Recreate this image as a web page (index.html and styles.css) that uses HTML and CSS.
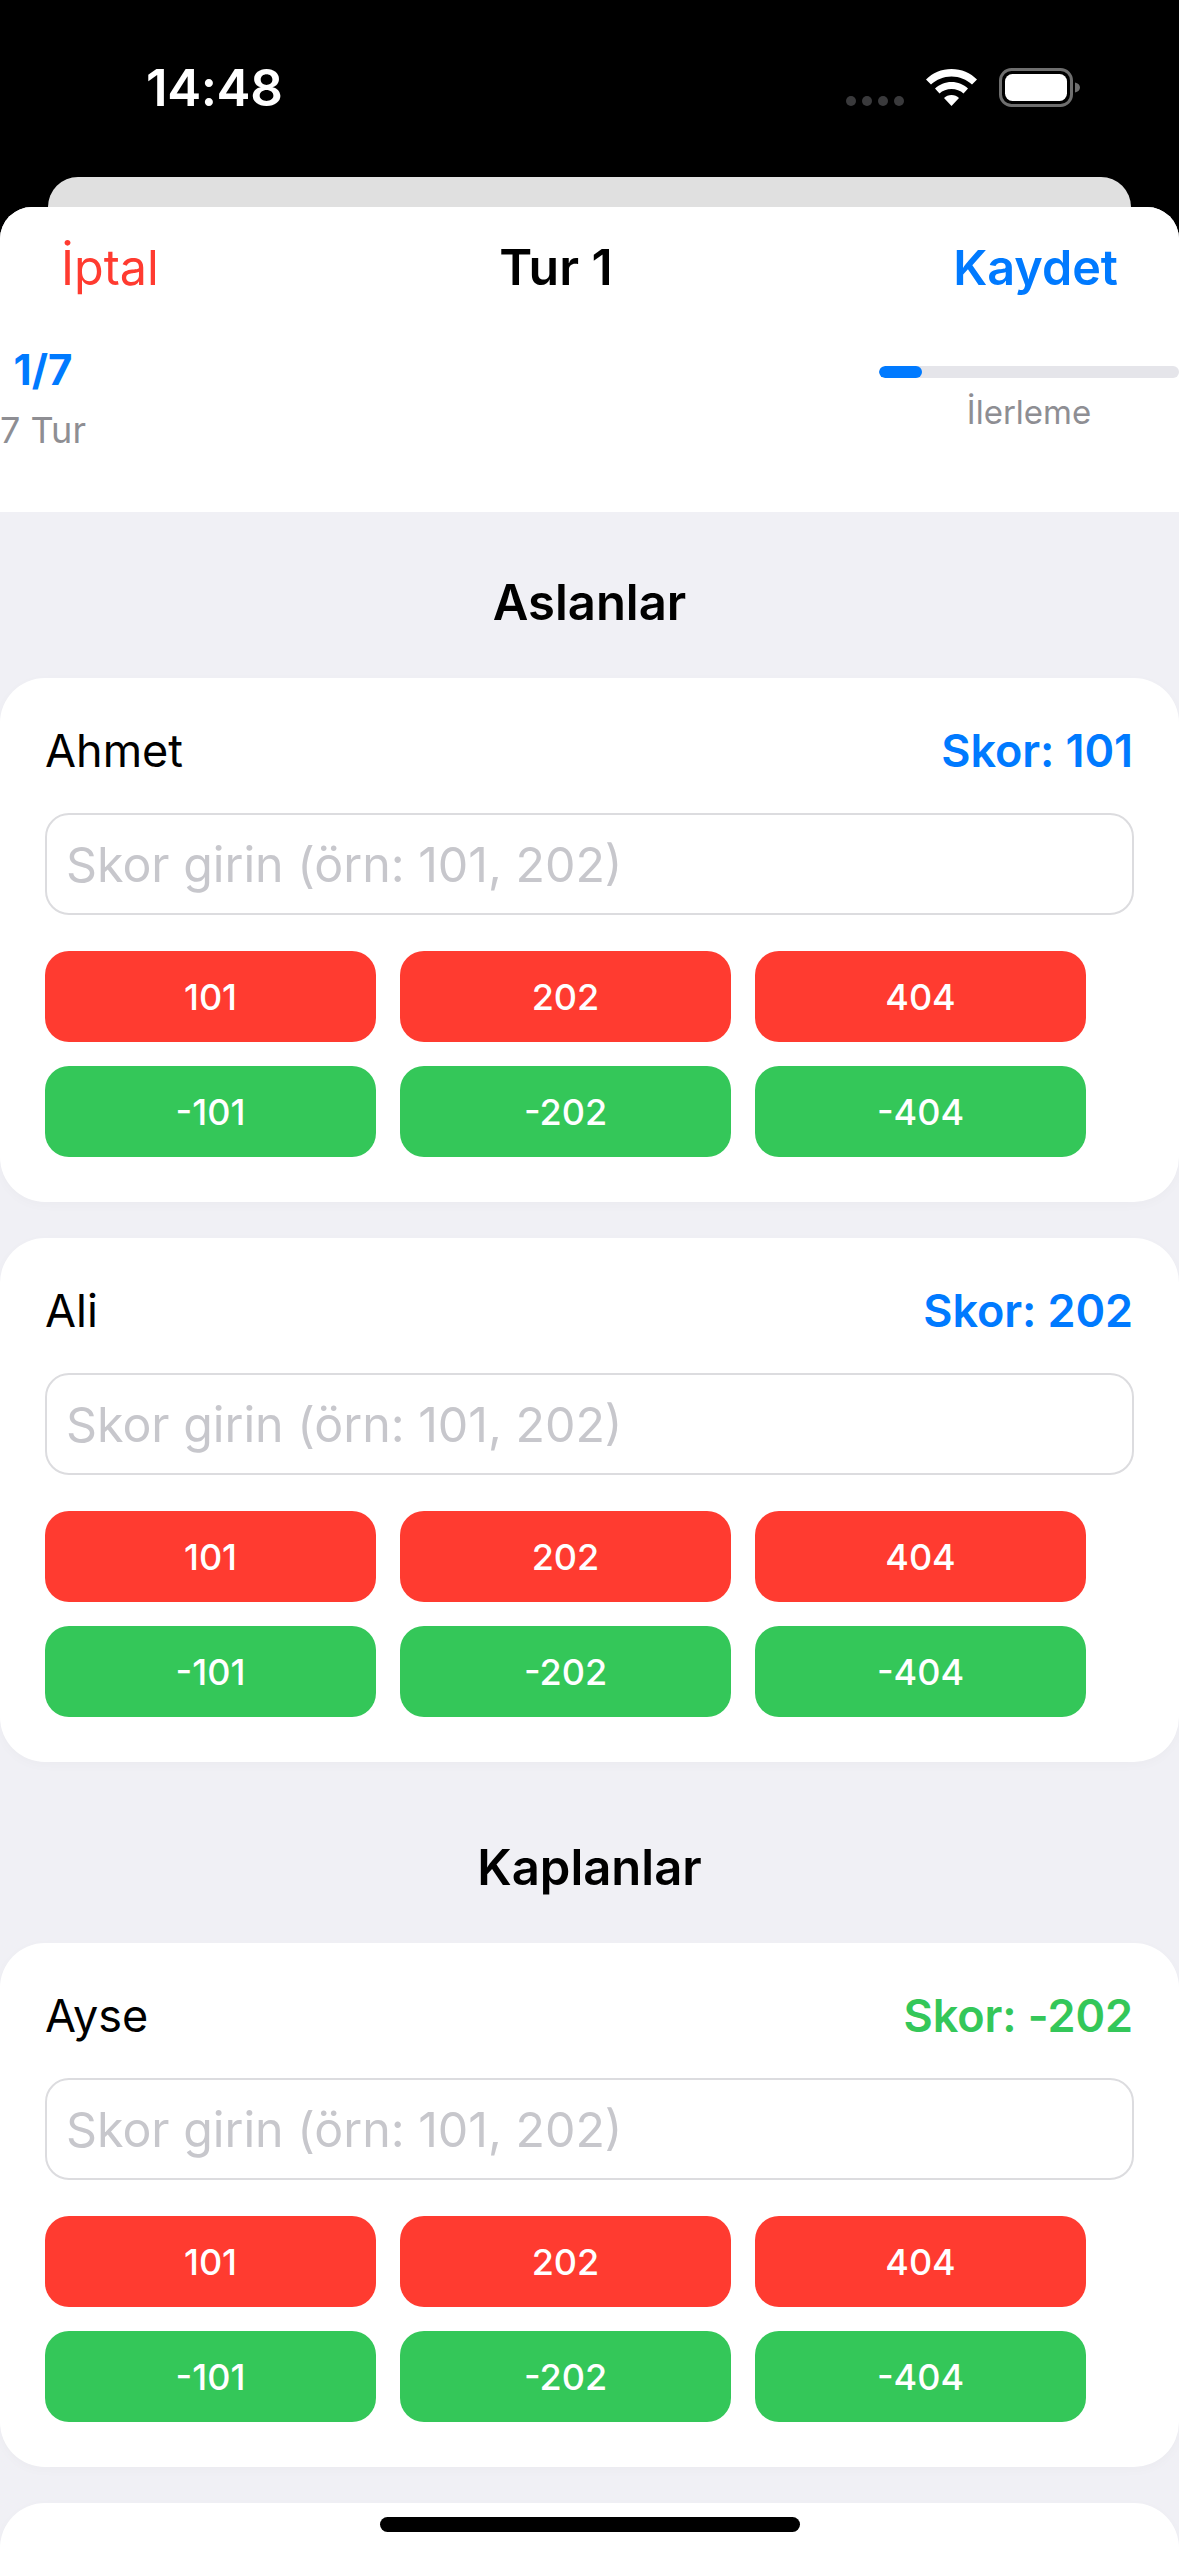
FILE: index.html
```html
<!DOCTYPE html>
<html lang="tr">
<head>
<meta charset="utf-8">
<title>Tur 1</title>
<link rel="stylesheet" href="styles.css">
</head>
<body>
<div class="phone">
  <header class="status">
    <span class="time">14:48</span>
    <div class="status-icons">
      <div class="signal"><i></i><i></i><i></i><i></i></div>
      <svg class="wifi" width="51" height="37" viewBox="0 0 51 37"><path fill="#fff" d="M0 10.500C6.500 4 15.500 0 25.500 0S44.500 4 51 10.500L46 15.500C40.500 10.500 33.500 7.500 25.500 7.500S10.500 10.500 5 15.500Z"/><path fill="#fff" d="M9 19.500C13.500 15.500 19 13 25.500 13S37.500 15.500 42 19.500L37.500 24.500C34.500 21.500 30 20 25.500 20S16.500 21.500 13.500 24.500Z"/><path fill="#fff" d="M18 29C20 27 22.500 26 25.500 26S31 27 33 29L25.500 37Z"/></svg>
      <svg class="battery" width="82" height="39" viewBox="0 0 82 39"><rect x="1.500" y="1.500" width="71" height="36" rx="11" fill="none" stroke="#6e6e6e" stroke-width="3"/><rect x="6" y="6" width="62" height="27" rx="7.500" fill="#fff"/><path d="M76 14.500C79 15 81 17 81 19.500S79 24 76 24.500Z" fill="#6e6e6e"/></svg>
    </div>
  </header>
  <div class="back-sheet"></div>
  <main class="sheet">
    <nav class="nav">
      <span class="cancel">İptal</span>
      <span class="title">Tur 1</span>
      <span class="save">Kaydet</span>
    </nav>
    <section class="stats">
      <div class="stat-round">
        <span class="round-num">1/7</span>
        <span class="round-label">7 Tur</span>
      </div>
      <div class="stat-progress">
        <div class="track"><div class="fill" style="width:14.28%"></div></div>
        <span class="progress-label">İlerleme</span>
      </div>
    </section>
    <section class="content">
      <h2 class="team">Aslanlar</h2>
      <article class="card">
        <div class="card-head"><span class="name">Ahmet</span><span class="score blue">Skor: 101</span></div>
        <div class="input">Skor girin (örn: 101, 202)</div>
        <div class="btn-row"><span class="btn red">101</span><span class="btn red">202</span><span class="btn red">404</span></div>
        <div class="btn-row"><span class="btn green">-101</span><span class="btn green">-202</span><span class="btn green">-404</span></div>
      </article>
      <article class="card">
        <div class="card-head"><span class="name">Ali</span><span class="score blue">Skor: 202</span></div>
        <div class="input">Skor girin (örn: 101, 202)</div>
        <div class="btn-row"><span class="btn red">101</span><span class="btn red">202</span><span class="btn red">404</span></div>
        <div class="btn-row"><span class="btn green">-101</span><span class="btn green">-202</span><span class="btn green">-404</span></div>
      </article>
      <h2 class="team team-next">Kaplanlar</h2>
      <article class="card">
        <div class="card-head"><span class="name">Ayse</span><span class="score lime">Skor: -202</span></div>
        <div class="input">Skor girin (örn: 101, 202)</div>
        <div class="btn-row"><span class="btn red">101</span><span class="btn red">202</span><span class="btn red">404</span></div>
        <div class="btn-row"><span class="btn green">-101</span><span class="btn green">-202</span><span class="btn green">-404</span></div>
      </article>
      <article class="card"></article>
    </section>
  </main>
  <div class="home-bar"></div>
</div>
</body>
</html>
```
FILE: styles.css
```css
* { box-sizing: border-box; }
html, body { margin: 0; padding: 0; background: #000; }
body { width: 1179px; height: 2556px; overflow: hidden; font-family: Inter, "Liberation Sans", sans-serif; }
.phone { position: relative; width: 1179px; height: 2556px; overflow: hidden; background: #000; display: flex; flex-direction: column; }
.status { height: 177px; flex: none; display: flex; justify-content: space-between; padding: 62px 98px 0 146px; align-items: flex-start; color: #fff; }
.time { font-size: 51px; line-height: 52px; font-weight: 600; letter-spacing: -0.4px; }
.status-icons { display: flex; align-items: flex-end; margin-top: 6px; }
.signal { display: flex; gap: 6px; margin: 0 22px 1px 0; }
.signal i { width: 10px; height: 10px; border-radius: 50%; background: #3a3a3c; }
.wifi { margin: 0 22px 1px 0; }
.back-sheet { height: 30px; flex: none; margin: 0 48px; background: #e0e0e0; border-radius: 30px 30px 0 0; }
.sheet { flex: 1; background: #f0f0f5; border-radius: 32px 32px 0 0; overflow: hidden; }
.nav { height: 114px; padding: 6px 61px 0 61px; background: #fff; display: flex; justify-content: space-between; align-items: center; font-size: 48.500px; }
.cancel { color: #ff3b30; font-weight: 400; }
.title { color: #000; font-weight: 600; font-size: 50px; }
.save { color: #007aff; font-weight: 600; }
.stats { height: 191px; background: #fff; display: flex; justify-content: space-between; align-items: flex-start; }
.stat-round { display: flex; flex-direction: column; align-items: center; width: 86px; padding-top: 18px; }
.round-num { color: #007aff; font-size: 42px; line-height: 62px; font-weight: 700; }
.round-label { color: #8e8e93; font-size: 36px; line-height: 44px; margin-top: 7px; }
.stat-progress { width: 300px; display: flex; flex-direction: column; align-items: center; padding-top: 45px; }
.track { width: 100%; height: 12px; background: #e5e5ea; border-radius: 6px; overflow: hidden; }
.fill { height: 100%; background: #007aff; border-radius: 6px; }
.progress-label { color: #8e8e93; font-size: 33px; line-height: 44px; margin-top: 12px; }
.team { margin: 0; height: 166px; padding-top: 60px; text-align: center; font-size: 49px; line-height: 62px; font-weight: 600; color: #000; }
.team-next { height: 145px; padding-top: 39px; }
.card { background: #fff; border-radius: 45px; padding: 45px; margin-bottom: 36px; height: 524px; box-shadow: 0 3px 12px rgba(0,0,0,.025); }
.card:last-child { height: 200px; }
.card-head { display: flex; justify-content: space-between; align-items: center; height: 54px; margin-bottom: 36px; }
.name { font-size: 45px; font-weight: 400; color: #000; }
.score { font-size: 45px; font-weight: 600; margin-right: 1px; letter-spacing: -0.1px; }
.blue { color: #007aff; }
.lime { color: #34c759; }
.input { height: 102px; border: 2px solid #dcdcdf; border-radius: 24px; padding: 0 19px; display: flex; align-items: center; font-size: 48.300px; color: #c7c7cc; background: #fff; margin-bottom: 36px; }
.btn-row { display: flex; gap: 24px; margin-bottom: 24px; }
.btn-row:last-child { margin-bottom: 0; }
.btn { width: 331px; height: 91px; border-radius: 24px; color: #fff; font-size: 36px; font-weight: 500; display: flex; align-items: center; justify-content: center; }
.red { background: #ff3b30; }
.green { background: #34c759; }
.home-bar { position: absolute; left: 380px; bottom: 24px; width: 420px; height: 15px; border-radius: 8px; background: #000; }
```
